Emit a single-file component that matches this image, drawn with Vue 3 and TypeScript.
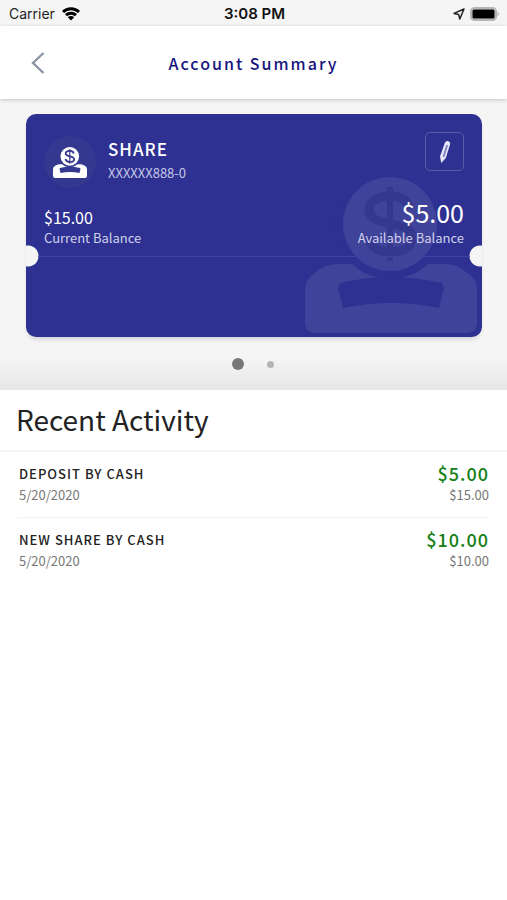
<script setup lang="ts">
import { ref } from 'vue'

interface Account {
  name: string
  number: string
  current: string
  available: string
}

interface Activity {
  id: number
  title: string
  date: string
  amount: string
  balance: string
}

const account: Account = {
  name: 'SHARE',
  number: 'XXXXXX888-0',
  current: '$15.00',
  available: '$5.00',
}

const activities: Activity[] = [
  { id: 1, title: 'DEPOSIT BY CASH', date: '5/20/2020', amount: '$5.00', balance: '$15.00' },
  { id: 2, title: 'NEW SHARE BY CASH', date: '5/20/2020', amount: '$10.00', balance: '$10.00' },
]

const slides = [0, 1]
const activeSlide = ref(0)
</script>

<template>
  <div class="screen">
    <svg class="defs" aria-hidden="true">
      <symbol id="deposit" viewBox="0 0 172 156">
        <path class="ink" d="M32 87h108q11 0 21 8 11 7 11 17v33q0 11-11 11H11q-11 0-11-11v-33q0-10 11-17 10-8 21-8z" />
        <circle class="cut" cx="85" cy="47" r="55" />
        <path class="cut" d="M35 106q50-12 102 0l2 5-5 20q-48-10-96 0l-5-20z" />
        <circle class="ink" cx="85" cy="47" r="47" />
        <path class="mark" d="M105 32C102 21 93 19 85 19c-12 0-21 6-21 14 0 19 43 8 43 28 0 9-9 14-21 14-11 0-20-4-23-15" />
        <path class="bar" d="M85 10v74" />
      </symbol>
    </svg>

    <div class="status">
      <div class="status-side">
        <span class="carrier">Carrier</span>
        <svg class="wifi" viewBox="0 0 18 14" aria-hidden="true">
          <path d="M1 5a11.500 11.500 0 0 1 16 0M4 8.200a7.200 7.200 0 0 1 10 0" />
          <path class="solid" d="M5.800 10.300a4.600 4.600 0 0 1 6.400 0L9 13.600z" />
        </svg>
      </div>
      <span class="time">3:08 PM</span>
      <div class="status-side end">
        <svg class="location" viewBox="0 0 12 12" aria-hidden="true">
          <path d="M11 1 1 5.400l4.600 1L6.800 11z" />
        </svg>
        <svg class="battery" viewBox="0 0 30 14" aria-hidden="true">
          <rect class="shell" x="1" y="1" width="25" height="12" rx="3.500" />
          <rect x="2.500" y="2.500" width="22" height="9" rx="1.500" />
          <path class="tip" d="M27.500 4.500q2.500 2.500 0 5z" />
        </svg>
      </div>
    </div>

    <header class="header">
      <button class="back" type="button" aria-label="Back">
        <svg viewBox="0 0 14 24" aria-hidden="true"><path d="M12.500 2 2 12l10.500 10" /></svg>
      </button>
      <h1 class="title">Account Summary</h1>
    </header>

    <section class="accounts">
      <article class="card">
        <svg class="watermark" aria-hidden="true"><use href="#deposit" /></svg>
        <div class="card-top">
          <div class="badge">
            <svg aria-hidden="true"><use href="#deposit" /></svg>
          </div>
          <div class="identity">
            <h2 class="name">{{ account.name }}</h2>
            <p class="number">{{ account.number }}</p>
          </div>
          <button class="edit" type="button" aria-label="Edit account">
            <svg viewBox="0 0 12 24" aria-hidden="true">
              <path class="body" d="M5.800 3Q7 .5 9.300 1.200T11 4.500L6.800 18 2.300 23 1 16.500z" />
              <path class="core" d="M8.200 5 4.500 17" />
            </svg>
          </button>
        </div>
        <div class="balances">
          <div>
            <p class="current">{{ account.current }}</p>
            <p class="label">Current Balance</p>
          </div>
          <div class="right">
            <p class="available">{{ account.available }}</p>
            <p class="label">Available Balance</p>
          </div>
        </div>
        <div class="tear"></div>
      </article>
      <nav class="dots" aria-label="Accounts">
        <button
          v-for="slide in slides"
          :key="slide"
          type="button"
          class="dot"
          :class="{ active: slide === activeSlide }"
          :aria-label="`Account ${slide + 1}`"
          @click="activeSlide = slide"
        ></button>
      </nav>
    </section>

    <section>
      <h2 class="heading">Recent Activity</h2>
      <ul class="list">
        <li v-for="item in activities" :key="item.id" class="row">
          <div>
            <p class="entry">{{ item.title }}</p>
            <p class="detail">{{ item.date }}</p>
          </div>
          <div class="right">
            <p class="amount">{{ item.amount }}</p>
            <p class="detail">{{ item.balance }}</p>
          </div>
        </li>
      </ul>
    </section>
  </div>
</template>

<style>
body {
  background: #fff;
}
</style>

<style scoped>
.screen {
  font-family: 'Noto Sans CJK SC', 'Noto Sans', sans-serif;
  color: #222;
}
h1, h2, p, ul {
  margin: 0;
  padding: 0;
  font-weight: 400;
}
button {
  padding: 0;
  border: 0;
  background: none;
  cursor: pointer;
}
svg {
  display: block;
  fill: none;
}
.defs {
  position: absolute;
  width: 0;
  height: 0;
}
.ink {
  fill: var(--ink);
}
.cut {
  fill: var(--cut);
}
.mark,
.bar {
  stroke: var(--mark);
  stroke-width: 9;
}
.bar {
  stroke-width: 6;
}
.status {
  display: grid;
  grid-template-columns: 1fr auto 1fr;
  align-items: center;
  height: 26px;
  padding: 0 7px 0 9px;
  background: #f5f5f5;
  font-family: Inter, sans-serif;
  font-size: 14px;
  line-height: 28px;
}
.status-side {
  display: flex;
  align-items: center;
  gap: 7px;
}
.end {
  justify-content: flex-end;
  gap: 5px;
}
.time {
  font-size: 15px;
  font-weight: 600;
  color: #111;
}
.wifi {
  width: 18px;
  height: 14px;
  stroke: #000;
  stroke-width: 3;
}
.wifi .solid {
  fill: #000;
  stroke: none;
}
.location {
  width: 12px;
  height: 12px;
  stroke: #222;
  stroke-width: 1.5;
  stroke-linejoin: round;
}
.battery {
  width: 30px;
  height: 14px;
  fill: #000;
}
.battery .shell {
  fill: #d0d0d0;
  stroke: #b5b5b5;
  stroke-width: 2;
}
.battery .tip {
  fill: #aaa;
}
.header {
  position: relative;
  display: grid;
  grid-template-columns: 44px 1fr 44px;
  align-items: center;
  height: 73px;
  padding: 0 16px;
  background: #fff;
  box-shadow: 0 1px 4px rgba(0, 0, 0, 0.2);
}
.back {
  display: grid;
  place-items: center;
  height: 44px;
}
.back svg {
  width: 14px;
  height: 24px;
  stroke: #8b96a3;
  stroke-width: 2.4;
}
.title {
  font-size: 16px;
  line-height: 24px;
  font-weight: 500;
  letter-spacing: 2px;
  text-align: center;
  color: #15157d;
}
.accounts {
  padding: 15px 25px 20px 26px;
  background: linear-gradient(#f5f5f5 calc(100% - 32px), #e6e6e6);
}
.card {
  position: relative;
  display: flex;
  flex-direction: column;
  min-height: 223px;
  border-radius: 10px;
  color: #fff;
  background:
    radial-gradient(circle at 2px 142px, #f5f5f5 10px, transparent 11px),
    radial-gradient(circle at calc(100% - 2px) 142px, #f5f5f5 10px, transparent 11px),
    #2e3192;
  box-shadow: 0 4px 5px -2px rgba(0, 0, 0, 0.15);
}
.watermark {
  --ink: #40439a;
  --cut: #2e3192;
  --mark: #35388f;
  position: absolute;
  right: 5px;
  bottom: 4px;
  width: 172px;
  height: 156px;
}
.card-top {
  position: relative;
  display: flex;
  padding: 18px 18px 0;
}
.badge {
  --ink: #fff;
  --cut: #35388f;
  --mark: #35388f;
  display: grid;
  place-items: center;
  width: 52px;
  height: 52px;
  margin-top: 4px;
  border-radius: 50%;
  background: #35388f;
}
.badge svg {
  width: 34px;
  height: 31px;
}
.identity {
  flex: 1;
  padding: 6px 12px 0;
}
.name {
  font-size: 17px;
  line-height: 22px;
  font-weight: 500;
  letter-spacing: 1px;
}
.number {
  padding-top: 2px;
  font-size: 13px;
  line-height: 22px;
  color: #c5c6e4;
}
.edit {
  display: grid;
  place-items: center;
  width: 39px;
  height: 39px;
  border: 1px solid #5a5ca8;
  border-radius: 5px;
}
.edit svg {
  width: 12px;
  height: 24px;
}
.edit .body {
  fill: #e8e8fa;
}
.edit .core {
  stroke: #8587c4;
  stroke-width: 2;
}
.balances {
  position: relative;
  display: flex;
  justify-content: space-between;
  align-items: flex-end;
  padding: 8px 18px 0;
}
.right {
  text-align: right;
}
.current {
  font-size: 16px;
  line-height: 22px;
}
.available {
  font-size: 25px;
  line-height: 32px;
}
.label {
  font-size: 13px;
  line-height: 20px;
  color: #d0d1ec;
}
.tear {
  position: relative;
  height: 1px;
  margin: 8px 12px 0;
  background: #4042a0;
}
.dots {
  display: flex;
  justify-content: center;
  padding-top: 21px;
}
.dot {
  display: grid;
  place-items: center;
  width: 32px;
  height: 12px;
}
.dot::before {
  content: '';
  width: 7px;
  height: 7px;
  border-radius: 50%;
  background: #b5b5b5;
}
.dot.active::before {
  width: 12px;
  height: 12px;
  background: #777;
}
.heading {
  padding: 10px 16px 12px;
  border-bottom: 2px solid #f5f5f5;
  font-size: 28px;
  line-height: 38px;
}
.list {
  list-style: none;
  padding: 0 18px;
}
.row {
  display: flex;
  justify-content: space-between;
  padding: 12px 0 12px 1px;
}
.row + .row {
  border-top: 1px solid #f2f2f2;
}
.entry,
.amount {
  padding-bottom: 2px;
  line-height: 19px;
  font-weight: 500;
  letter-spacing: 1px;
}
.entry {
  font-size: 13px;
}
.amount {
  font-size: 18px;
  color: #168016;
}
.detail {
  font-size: 13px;
  line-height: 20px;
  color: #777;
}
</style>
